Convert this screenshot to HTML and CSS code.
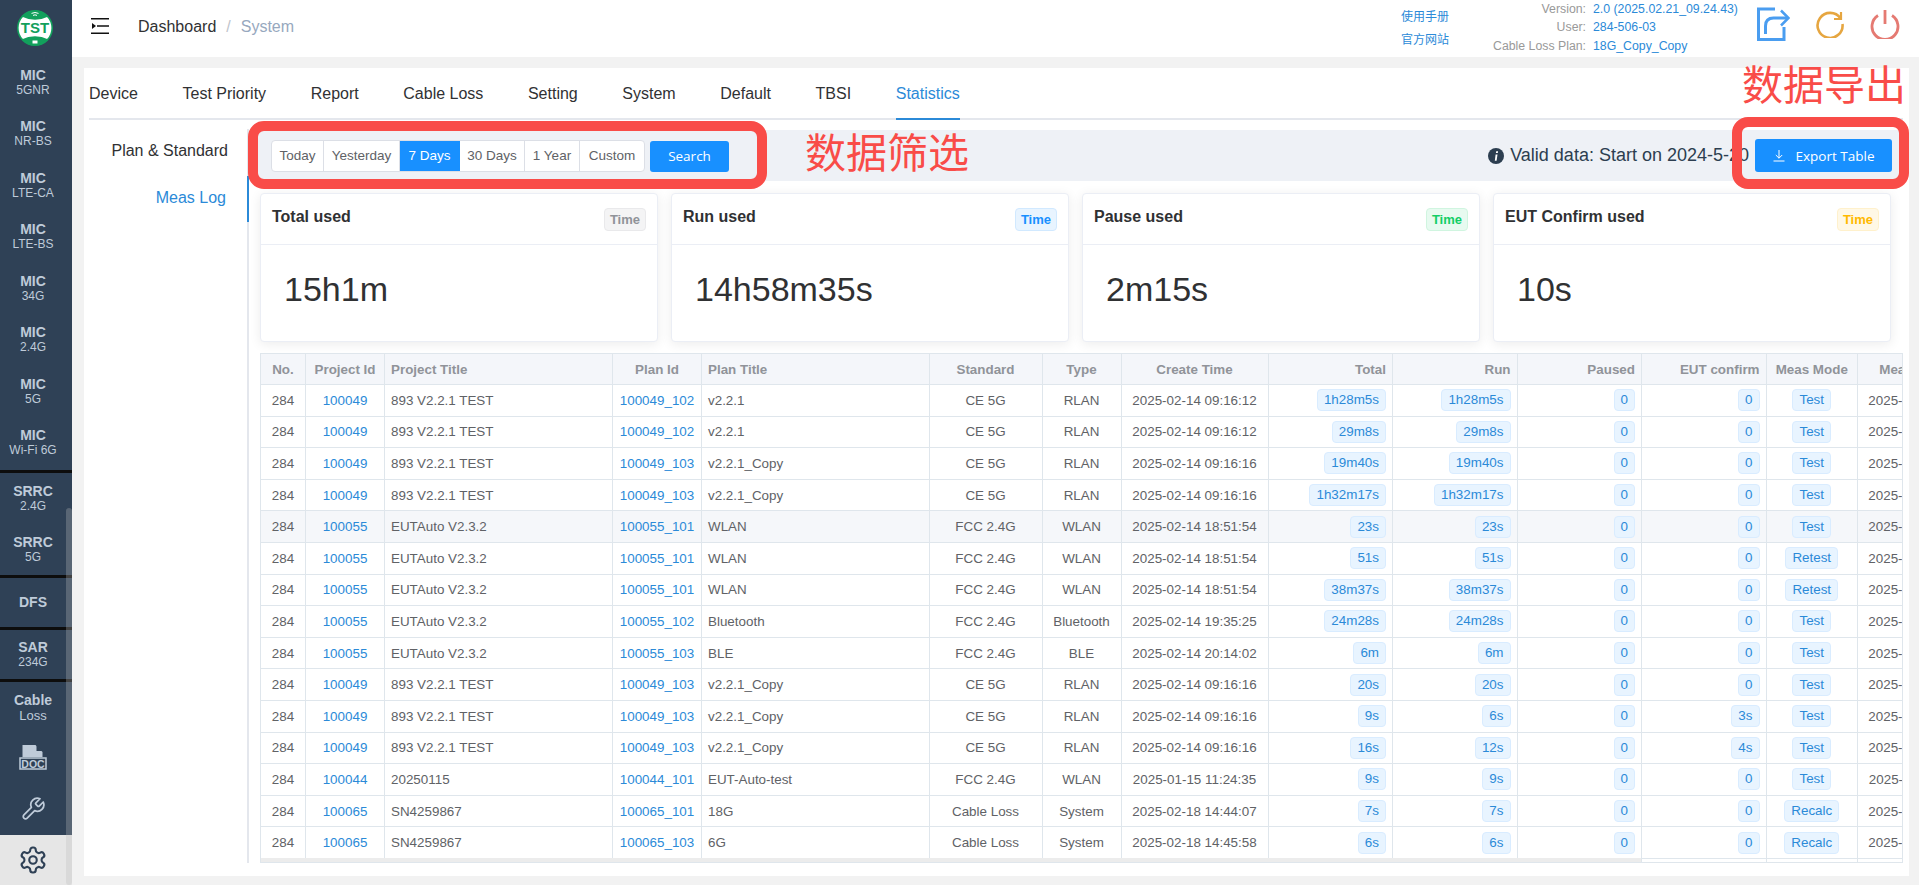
FILE: index.html
```html
<!DOCTYPE html>
<html lang="en">
<head>
    <meta charset="UTF-8">
    <title>System</title>
    <link rel="stylesheet" href="styles.css">
</head>
<body>

    <div class="app">
        <aside class="sidebar">
            <div class="logo">
                <svg width="36" height="36" viewBox="0 0 36 36">
                    <circle cx="18" cy="18" r="18" fill="#12a05c"/>
                    <circle cx="18" cy="18" r="16.4" fill="#fff"/>
                    <path d="M4.500 6.500Q18 13 31.500 6.500A18 18 0 0 0 4.500 6.500zM4.500 29.500Q18 23 31.500 29.500A18 18 0 0 1 4.500 29.500z" fill="#12a05c"/>
                    <path d="M14.500 3.400Q18 1.600 21.500 3.400M16 5.400Q18 4.300 20 5.400" fill="none" stroke="#fff" stroke-width="1"/>
                    <path d="M15.500 30.500h5v3h-5z" fill="#fff"/>
                    <text x="18" y="23.200" class="logo-text">TST</text>
                </svg>
            </div>
            <div class="menu-item mic"><b>MIC</b><span>5GNR</span></div>
            <div class="menu-item mic"><b>MIC</b><span>NR-BS</span></div>
            <div class="menu-item mic"><b>MIC</b><span>LTE-CA</span></div>
            <div class="menu-item mic"><b>MIC</b><span>LTE-BS</span></div>
            <div class="menu-item mic"><b>MIC</b><span>34G</span></div>
            <div class="menu-item mic"><b>MIC</b><span>2.4G</span></div>
            <div class="menu-item mic"><b>MIC</b><span>5G</span></div>
            <div class="menu-item mic group-end"><b>MIC</b><span>Wi-Fi 6G</span></div>
            <div class="menu-item tall"><b>SRRC</b><span>2.4G</span></div>
            <div class="menu-item tall group-end"><b>SRRC</b><span>5G</span></div>
            <div class="menu-item group-end"><b>DFS</b></div>
            <div class="menu-item group-end"><b>SAR</b><span>234G</span></div>
            <div class="menu-item tall"><b>Cable</b><span class="loss">Loss</span></div>
            <div class="menu-item">
                <svg width="28" height="25" viewBox="0 0 28 25">
                    <path d="M3.500 0h13l7 7v5h-20z" fill="#bfcbd9"/>
                    <path d="M17.500 0l6 6h-6z" fill="#2f4156"/>
                    <rect x="1" y="13" width="26" height="11" fill="#2f4156" stroke="#bfcbd9" stroke-width="1.500"/>
                    <text x="14" y="22.500" class="doc-text">DOC</text>
                </svg>
            </div>
            <div class="menu-item tool-item">
                <svg width="26" height="26" viewBox="0 0 24 24" fill="none" stroke="#bfcbd9" stroke-width="1.6" stroke-linejoin="round">
                    <path d="M14.7 6.3a1 1 0 0 0 0 1.4l1.6 1.6a1 1 0 0 0 1.4 0l3.77-3.77a6 6 0 0 1-7.94 7.94l-6.91 6.91a2.12 2.12 0 0 1-3-3l6.91-6.91a6 6 0 0 1 7.94-7.94l-3.76 3.76z"/>
                </svg>
            </div>
            <div class="menu-item gear-item">
                <svg width="30" height="30" viewBox="0 0 24 24" fill="none" stroke="#2f4156" stroke-width="1.7">
                    <path d="M12.22 2h-.44a2 2 0 0 0-2 2v.18a2 2 0 0 1-1 1.73l-.43.25a2 2 0 0 1-2 0l-.15-.08a2 2 0 0 0-2.73.73l-.22.38a2 2 0 0 0 .73 2.73l.15.1a2 2 0 0 1 1 1.72v.51a2 2 0 0 1-1 1.74l-.15.09a2 2 0 0 0-.73 2.73l.22.38a2 2 0 0 0 2.73.73l.15-.08a2 2 0 0 1 2 0l.43.25a2 2 0 0 1 1 1.73V20a2 2 0 0 0 2 2h.44a2 2 0 0 0 2-2v-.18a2 2 0 0 1 1-1.73l.43-.25a2 2 0 0 1 2 0l.15.08a2 2 0 0 0 2.73-.73l.22-.39a2 2 0 0 0-.73-2.73l-.15-.08a2 2 0 0 1-1-1.74v-.5a2 2 0 0 1 1-1.74l.15-.09a2 2 0 0 0 .73-2.73l-.22-.38a2 2 0 0 0-2.73-.73l-.15.08a2 2 0 0 1-2 0l-.43-.25a2 2 0 0 1-1-1.73V4a2 2 0 0 0-2-2z"/>
                    <circle cx="12" cy="12" r="3"/>
                </svg>
            </div>
            <div class="side-scroll"></div>
        </aside>

        <div class="main">
            <header class="navbar">
                <svg class="hamburger" width="18" height="16" viewBox="0 0 18 16">
                    <path d="M0 .8h18M6 8h12M0 15.2h18" stroke="#111" stroke-width="1.6" fill="none"/>
                    <path d="M1 5l4 3-4 3z" fill="#111"/>
                </svg>
                <div class="crumbs">
                    <span>Dashboard</span><i>/</i><span class="crumb-last">System</span>
                </div>
                <div class="nav-links">
                    <a>使用手册</a>
                    <a>官方网站</a>
                </div>
                <dl class="version">
                    <dt>Version:</dt><dd>2.0 (2025.02.21_09.24.43)</dd>
                    <dt>User:</dt><dd>284-506-03</dd>
                    <dt>Cable Loss Plan:</dt><dd>18G_Copy_Copy</dd>
                </dl>
                <div class="nav-icons">
                    <svg width="33" height="34" viewBox="0 0 33 34" fill="none" stroke="#4a9df0" stroke-width="3">
                        <path d="M18 2H1.500v30.500H27V20"/>
                        <path d="M8.500 27v-8q0-8 8-8H30"/>
                        <path d="M24 3.500l7.500 7.500-7.500 7.500" stroke-width="2.500"/>
                    </svg>
                    <svg width="28" height="28" viewBox="0 0 28 28" fill="none" stroke="#e6a640" stroke-width="2.600">
                        <path d="M24.500 8.500A12.500 12.500 0 1 0 26.500 14"/>
                        <path d="M18 9h7V2" stroke-width="2.200"/>
                    </svg>
                    <svg width="30" height="30" viewBox="0 0 30 30" fill="none" stroke="#e57a72" stroke-width="2.800">
                        <path d="M15 1v14"/>
                        <path d="M8 6.500a13 13 0 1 0 14 0"/>
                    </svg>
                </div>
            </header>

            <div class="content">
                <div class="panel">
                    <nav class="tabs">
                        <a>Device</a>
                        <a>Test Priority</a>
                        <a>Report</a>
                        <a>Cable Loss</a>
                        <a>Setting</a>
                        <a>System</a>
                        <a>Default</a>
                        <a>TBSI</a>
                        <a class="active">Statistics</a>
                    </nav>

                    <div class="tab-body">
                        <div class="side-tabs">
                            <a>Plan &amp; Standard</a>
                            <a class="active">Meas Log</a>
                        </div>

                        <div class="stats-pane">
                            <div class="toolbar">
                                <div class="range-group">
                                    <button>Today</button>
                                    <button>Yesterday</button>
                                    <button class="active">7 Days</button>
                                    <button>30 Days</button>
                                    <button>1 Year</button>
                                    <button>Custom</button>
                                </div>
                                <button class="btn-primary search-btn">Search</button>
                                <div class="valid-note">
                                    <svg width="16" height="16" viewBox="0 0 16 16">
                                        <circle cx="8" cy="8" r="8" fill="#2c3e50"/>
                                        <path d="M8.200 3.200h1.900l-.3 1.800H7.900zM7.600 6.400h1.900L8.600 12.800H6.800z" fill="#fff"/>
                                    </svg>
                                    <span>Valid data: Start on 2024-5-20</span>
                                </div>
                                <button class="btn-primary export-btn">
                                    <svg width="12" height="13" viewBox="0 0 12 13" fill="none" stroke="#fff" stroke-width="1">
                                        <path d="M6 1v8M2.800 6L6 9.200 9.200 6M.5 12h11"/>
                                    </svg>
                                    Export Table
                                </button>
                            </div>

                            <div class="cards">
                                <div class="card">
                                    <div class="card-head"><b>Total used</b><span class="tag-time grey">Time</span></div>
                                    <div class="card-value">15h1m</div>
                                </div>
                                <div class="card">
                                    <div class="card-head"><b>Run used</b><span class="tag-time blue">Time</span></div>
                                    <div class="card-value">14h58m35s</div>
                                </div>
                                <div class="card">
                                    <div class="card-head"><b>Pause used</b><span class="tag-time green">Time</span></div>
                                    <div class="card-value">2m15s</div>
                                </div>
                                <div class="card">
                                    <div class="card-head"><b>EUT Confirm used</b><span class="tag-time yellow">Time</span></div>
                                    <div class="card-value">10s</div>
                                </div>
                            </div>

                            <div class="table-wrap">
                                <table class="log-table">
                                    <colgroup>
                                        <col class="c-no"><col class="c-pid"><col class="c-ptitle"><col class="c-plan"><col class="c-plantitle"><col class="c-std"><col class="c-type"><col class="c-time"><col class="c-dur"><col class="c-dur"><col class="c-dur"><col class="c-dur"><col class="c-mode"><col class="c-start">
                                    </colgroup>
                                    <thead>
                                        <tr>
                                            <th>No.</th><th>Project Id</th><th class="left">Project Title</th><th>Plan Id</th><th class="left">Plan Title</th><th>Standard</th><th>Type</th><th>Create Time</th><th class="right">Total</th><th class="right">Run</th><th class="right">Paused</th><th class="right">EUT confirm</th><th>Meas Mode</th><th>Meas Start Time</th>
                                        </tr>
                                    </thead>
                                    <tbody>
                                        <tr><td>284</td><td><a>100049</a></td><td class="left">893 V2.2.1 TEST</td><td><a>100049_102</a></td><td class="left">v2.2.1</td><td>CE 5G</td><td>RLAN</td><td>2025-02-14 09:16:12</td><td class="right"><span class="tag">1h28m5s</span></td><td class="right"><span class="tag">1h28m5s</span></td><td class="right"><span class="tag">0</span></td><td class="right"><span class="tag">0</span></td><td><span class="tag">Test</span></td><td>2025-02-14 09:16:12</td></tr>
                                        <tr><td>284</td><td><a>100049</a></td><td class="left">893 V2.2.1 TEST</td><td><a>100049_102</a></td><td class="left">v2.2.1</td><td>CE 5G</td><td>RLAN</td><td>2025-02-14 09:16:12</td><td class="right"><span class="tag">29m8s</span></td><td class="right"><span class="tag">29m8s</span></td><td class="right"><span class="tag">0</span></td><td class="right"><span class="tag">0</span></td><td><span class="tag">Test</span></td><td>2025-02-14 09:16:12</td></tr>
                                        <tr><td>284</td><td><a>100049</a></td><td class="left">893 V2.2.1 TEST</td><td><a>100049_103</a></td><td class="left">v2.2.1_Copy</td><td>CE 5G</td><td>RLAN</td><td>2025-02-14 09:16:16</td><td class="right"><span class="tag">19m40s</span></td><td class="right"><span class="tag">19m40s</span></td><td class="right"><span class="tag">0</span></td><td class="right"><span class="tag">0</span></td><td><span class="tag">Test</span></td><td>2025-02-14 09:16:16</td></tr>
                                        <tr><td>284</td><td><a>100049</a></td><td class="left">893 V2.2.1 TEST</td><td><a>100049_103</a></td><td class="left">v2.2.1_Copy</td><td>CE 5G</td><td>RLAN</td><td>2025-02-14 09:16:16</td><td class="right"><span class="tag">1h32m17s</span></td><td class="right"><span class="tag">1h32m17s</span></td><td class="right"><span class="tag">0</span></td><td class="right"><span class="tag">0</span></td><td><span class="tag">Test</span></td><td>2025-02-14 09:16:16</td></tr>
                                        <tr class="hover-row"><td>284</td><td><a>100055</a></td><td class="left">EUTAuto V2.3.2</td><td><a>100055_101</a></td><td class="left">WLAN</td><td>FCC 2.4G</td><td>WLAN</td><td>2025-02-14 18:51:54</td><td class="right"><span class="tag">23s</span></td><td class="right"><span class="tag">23s</span></td><td class="right"><span class="tag">0</span></td><td class="right"><span class="tag">0</span></td><td><span class="tag">Test</span></td><td>2025-02-14 18:51:54</td></tr>
                                        <tr><td>284</td><td><a>100055</a></td><td class="left">EUTAuto V2.3.2</td><td><a>100055_101</a></td><td class="left">WLAN</td><td>FCC 2.4G</td><td>WLAN</td><td>2025-02-14 18:51:54</td><td class="right"><span class="tag">51s</span></td><td class="right"><span class="tag">51s</span></td><td class="right"><span class="tag">0</span></td><td class="right"><span class="tag">0</span></td><td><span class="tag">Retest</span></td><td>2025-02-14 18:51:54</td></tr>
                                        <tr><td>284</td><td><a>100055</a></td><td class="left">EUTAuto V2.3.2</td><td><a>100055_101</a></td><td class="left">WLAN</td><td>FCC 2.4G</td><td>WLAN</td><td>2025-02-14 18:51:54</td><td class="right"><span class="tag">38m37s</span></td><td class="right"><span class="tag">38m37s</span></td><td class="right"><span class="tag">0</span></td><td class="right"><span class="tag">0</span></td><td><span class="tag">Retest</span></td><td>2025-02-14 18:51:54</td></tr>
                                        <tr><td>284</td><td><a>100055</a></td><td class="left">EUTAuto V2.3.2</td><td><a>100055_102</a></td><td class="left">Bluetooth</td><td>FCC 2.4G</td><td>Bluetooth</td><td>2025-02-14 19:35:25</td><td class="right"><span class="tag">24m28s</span></td><td class="right"><span class="tag">24m28s</span></td><td class="right"><span class="tag">0</span></td><td class="right"><span class="tag">0</span></td><td><span class="tag">Test</span></td><td>2025-02-14 19:35:25</td></tr>
                                        <tr><td>284</td><td><a>100055</a></td><td class="left">EUTAuto V2.3.2</td><td><a>100055_103</a></td><td class="left">BLE</td><td>FCC 2.4G</td><td>BLE</td><td>2025-02-14 20:14:02</td><td class="right"><span class="tag">6m</span></td><td class="right"><span class="tag">6m</span></td><td class="right"><span class="tag">0</span></td><td class="right"><span class="tag">0</span></td><td><span class="tag">Test</span></td><td>2025-02-14 20:14:02</td></tr>
                                        <tr><td>284</td><td><a>100049</a></td><td class="left">893 V2.2.1 TEST</td><td><a>100049_103</a></td><td class="left">v2.2.1_Copy</td><td>CE 5G</td><td>RLAN</td><td>2025-02-14 09:16:16</td><td class="right"><span class="tag">20s</span></td><td class="right"><span class="tag">20s</span></td><td class="right"><span class="tag">0</span></td><td class="right"><span class="tag">0</span></td><td><span class="tag">Test</span></td><td>2025-02-14 09:16:16</td></tr>
                                        <tr><td>284</td><td><a>100049</a></td><td class="left">893 V2.2.1 TEST</td><td><a>100049_103</a></td><td class="left">v2.2.1_Copy</td><td>CE 5G</td><td>RLAN</td><td>2025-02-14 09:16:16</td><td class="right"><span class="tag">9s</span></td><td class="right"><span class="tag">6s</span></td><td class="right"><span class="tag">0</span></td><td class="right"><span class="tag">3s</span></td><td><span class="tag">Test</span></td><td>2025-02-14 09:16:16</td></tr>
                                        <tr><td>284</td><td><a>100049</a></td><td class="left">893 V2.2.1 TEST</td><td><a>100049_103</a></td><td class="left">v2.2.1_Copy</td><td>CE 5G</td><td>RLAN</td><td>2025-02-14 09:16:16</td><td class="right"><span class="tag">16s</span></td><td class="right"><span class="tag">12s</span></td><td class="right"><span class="tag">0</span></td><td class="right"><span class="tag">4s</span></td><td><span class="tag">Test</span></td><td>2025-02-14 09:16:16</td></tr>
                                        <tr><td>284</td><td><a>100044</a></td><td class="left">20250115</td><td><a>100044_101</a></td><td class="left">EUT-Auto-test</td><td>FCC 2.4G</td><td>WLAN</td><td>2025-01-15 11:24:35</td><td class="right"><span class="tag">9s</span></td><td class="right"><span class="tag">9s</span></td><td class="right"><span class="tag">0</span></td><td class="right"><span class="tag">0</span></td><td><span class="tag">Test</span></td><td>2025-01-15 11:24:35</td></tr>
                                        <tr><td>284</td><td><a>100065</a></td><td class="left">SN4259867</td><td><a>100065_101</a></td><td class="left">18G</td><td>Cable Loss</td><td>System</td><td>2025-02-18 14:44:07</td><td class="right"><span class="tag">7s</span></td><td class="right"><span class="tag">7s</span></td><td class="right"><span class="tag">0</span></td><td class="right"><span class="tag">0</span></td><td><span class="tag">Recalc</span></td><td>2025-02-18 14:44:07</td></tr>
                                        <tr><td>284</td><td><a>100065</a></td><td class="left">SN4259867</td><td><a>100065_103</a></td><td class="left">6G</td><td>Cable Loss</td><td>System</td><td>2025-02-18 14:45:58</td><td class="right"><span class="tag">6s</span></td><td class="right"><span class="tag">6s</span></td><td class="right"><span class="tag">0</span></td><td class="right"><span class="tag">0</span></td><td><span class="tag">Recalc</span></td><td>2025-02-18 14:45:58</td></tr>
                                        <tr><td></td><td></td><td></td><td></td><td></td><td></td><td></td><td></td><td></td><td></td><td></td><td></td><td></td><td></td></tr>
                                    </tbody>
                                </table>
                                <div class="table-scroll"></div>
                            </div>
                        </div>
                    </div>
                </div>
            </div>
        </div>
    </div>

    <!-- red notes drawn over the shot -->
    <div class="note-box note-filter"></div>
    <div class="note-box note-export"></div>
    <div class="note-text note-filter-text">数据筛选</div>
    <div class="note-text note-export-text">数据导出</div>

</body>
</html>
```

FILE: styles.css
```css
html, body {
    height: 100%;
    margin: 0;
    overflow: hidden;
}
body {
    font-family: "Liberation Sans", Arial, "Noto Sans CJK SC", sans-serif;
    color: #303133;
    background-color: #f2f2f2;
}
a {
    color: inherit;
    text-decoration: none;
}
button {
    font-family: inherit;
    cursor: pointer;
}
.app {
    display: flex;
    height: 885px;
}

/* sidebar */
.sidebar {
    position: relative;
    flex: 0 0 72px;
    display: flex;
    flex-direction: column;
    overflow: hidden;
    background-color: #2f4156;
    color: #bfcbd9;
}
.logo {
    height: 58px;
    display: flex;
    justify-content: center;
    padding: 10px 2px 0 0;
    box-sizing: border-box;
}
.logo-text {
    font-size: 15px;
    font-weight: bold;
    text-anchor: middle;
    fill: #12a05c;
}
.doc-text {
    font-size: 10.5px;
    font-weight: bold;
    text-anchor: middle;
    fill: #bfcbd9;
}
.menu-item {
    height: 49px;
    padding-right: 6px;
    display: flex;
    flex-direction: column;
    align-items: center;
    justify-content: center;
    flex-shrink: 0;
    box-sizing: content-box;
    line-height: 15px;
}
.menu-item.mic {
    height: 49.500px;
    padding-bottom: 2px;
}
.menu-item.tall {
    height: 51px;
}
.menu-item b {
    font-size: 14px;
}
.menu-item span {
    font-size: 12px;
}
.menu-item .loss {
    font-size: 13px;
}
.group-end {
    border-bottom: 3px solid #0d0d0d;
}
.tool-item {
    height: 53px;
}
.gear-item {
    height: 50px;
    background-color: #e6e6e6;
}
.side-scroll {
    position: absolute;
    left: 66px;
    top: 508px;
    width: 6px;
    height: 377px;
    border-radius: 3px;
    background-color: rgba(190, 190, 190, 0.3);
}

/* top bar */
.main {
    flex: 1;
    min-width: 0;
    display: flex;
    flex-direction: column;
}
.navbar {
    height: 57px;
    flex-shrink: 0;
    display: flex;
    align-items: center;
    background-color: #fff;
    padding: 0 19px 0 19px;
}
.hamburger {
    flex-shrink: 0;
    margin-bottom: 5px;
}
.crumbs {
    margin-left: 29px;
    font-size: 16px;
    flex: 1;
    margin-bottom: 4px;
}
.crumbs i {
    font-style: normal;
    color: #c0c4cc;
    margin: 0 10px;
}
.crumb-last {
    color: #97a8be;
}
.nav-links {
    display: flex;
    flex-direction: column;
    gap: 6px;
    font-size: 12px;
    line-height: 17px;
    color: #2b8ad8;
    margin-right: 2px;
}
.version {
    display: grid;
    grid-template-columns: 135px 165px;
    column-gap: 7px;
    margin: 0;
    font-size: 12.300px;
    line-height: 18.3px;
    align-self: flex-start;
    padding-top: 0;
}
.version dt {
    text-align: right;
    color: #999;
}
.version dd {
    margin: 0;
    color: #2b8ad8;
}
.nav-icons {
    display: flex;
    align-items: center;
    gap: 26px;
    margin-left: -1px;
    margin-bottom: 10px;
}

/* panel */
.content {
    flex: 1;
    min-height: 0;
    padding: 11px 10px 9px 12px;
    display: flex;
}
.panel {
    flex: 1;
    min-width: 0;
    display: flex;
    flex-direction: column;
    background-color: #fff;
}
.tabs {
    height: 50px;
    margin-left: 5px;
    margin-right: 6px;
    display: flex;
    gap: 44.600px;
    align-items: flex-start;
    font-size: 16px;
    border-bottom: 2px solid #e4e7ed;
    flex-shrink: 0;
}
.tabs a {
    line-height: 52px;
    height: 50px;
    color: #303133;
}
.tabs .active {
    color: #2b8ad8;
    border-bottom: 2px solid #2b8ad8;
}
.tab-body {
    flex: 1;
    min-height: 0;
    display: flex;
    padding: 9px 6px 13px 0;
}
.side-tabs {
    flex: 0 0 163px;
    box-sizing: content-box;
    border-right: 2px solid #e4e7ed;
    display: flex;
    flex-direction: column;
    align-items: stretch;
    font-size: 16px;
}
.side-tabs a {
    height: 46.5px;
    line-height: 44px;
    text-align: right;
    padding-right: 21px;
    color: #303133;
    margin-right: -2px;
}
.side-tabs .active {
    color: #2b8ad8;
    border-right: 2px solid #2b8ad8;
}

/* statistics */
.stats-pane {
    flex: 1;
    min-width: 0;
    display: flex;
    flex-direction: column;
    padding-left: 5px;
}
.toolbar {
    height: 51px;
    flex-shrink: 0;
    margin-top: 1px;
    display: flex;
    align-items: center;
    background-color: #eef1f6;
    padding: 0 11px 0 17px;
}
.range-group {
    display: flex;
    height: 30px;
    border: 1px solid #dcdfe6;
    border-radius: 4px;
    background-color: #fff;
    overflow: hidden;
}
.range-group button {
    height: 100%;
    padding: 0;
    border: 0;
    border-right: 1px solid #dcdfe6;
    background: none;
    font-size: 13.5px;
    color: #606266;
    width: 52px;
}
.range-group button:nth-child(2) { width: 76px; }
.range-group button:nth-child(3) { width: 60px; }
.range-group button:nth-child(4) { width: 65px; }
.range-group button:nth-child(5) { width: 55px; }
.range-group button:nth-child(6) { width: 64px; border-right: 0; }
.range-group .active {
    background-color: #1890ff;
    color: #fff;
    border-right-color: #1890ff;
}
.btn-primary {
    height: 33px;
    border: 0;
    border-radius: 3px;
    background-color: #1890ff;
    color: #fff;
    font-family: "Open Sans", sans-serif;
    font-size: 13.500px;
}
.search-btn {
    width: 79px;
    margin-left: 5px;
    height: 31px;
    margin-top: 1px;
}
.valid-note {
    margin-left: auto;
    display: flex;
    align-items: center;
    gap: 6px;
    font-size: 18px;
    color: #2c3e50;
}
.export-btn {
    width: 137px;
    margin-left: 6px;
    display: flex;
    align-items: center;
    justify-content: center;
    gap: 11px;
}
.cards {
    display: grid;
    grid-template-columns: repeat(4, 1fr);
    gap: 13px;
    flex-shrink: 0;
    margin: 12px 12px 0 6px;
}
.card {
    height: 149px;
    box-sizing: border-box;
    border: 1px solid #ebeef5;
    border-radius: 4px;
    box-shadow: 0 2px 12px rgba(0, 0, 0, 0.08);
    background-color: #fff;
}
.card-head {
    height: 51px;
    box-sizing: border-box;
    border-bottom: 1px solid #ebeef5;
    display: flex;
    justify-content: space-between;
    align-items: flex-start;
    padding: 14px 11px 0 11px;
    font-size: 16px;
}
.tag-time {
    height: 23px;
    box-sizing: border-box;
    line-height: 21px;
    padding: 0 5px;
    border: 1px solid;
    border-radius: 4px;
    font-size: 13px;
    font-weight: bold;
}
.grey {
    background-color: #f4f4f5;
    border-color: #e9e9eb;
    color: #909399;
}
.blue {
    background-color: #e8f4ff;
    border-color: #d1e9ff;
    color: #1890ff;
}
.green {
    background-color: #e7faf0;
    border-color: #d0f5e0;
    color: #13ce66;
}
.yellow {
    background-color: #fff8e6;
    border-color: #fff1cc;
    color: #ffba00;
}
.card-value {
    font-size: 34px;
    padding: 0 0 0 23px;
    line-height: 88px;
}

/* table */
.table-wrap {
    position: relative;
    flex: 1;
    min-height: 0;
    margin-top: 11px;
    margin-left: 6px;
    overflow: hidden;
    border: 1px solid #dfe6ec;
}
.log-table {
    table-layout: fixed;
    width: 1742px;
    border-collapse: separate;
    border-spacing: 0;
    font-size: 13.4px;
    color: #606266;
}
.c-no { width: 45px; }
.c-pid { width: 79px; }
.c-ptitle { width: 228px; }
.c-plan { width: 89px; }
.c-plantitle { width: 227.5px; }
.c-std { width: 113px; }
.c-type { width: 79px; }
.c-time { width: 147px; }
.c-dur { width: 124.500px; }
.c-mode { width: 91.500px; }
.c-start { width: 146px; }
.log-table th, .log-table td {
    height: 31.6px;
    padding: 0 6px;
    box-sizing: border-box;
    border-right: 1px solid #dfe6ec;
    border-bottom: 1px solid #dfe6ec;
    text-align: center;
    white-space: nowrap;
    overflow: hidden;
}
.log-table th {
    height: 31px;
    background-color: #f4f6fa;
    color: #909399;
    font-weight: bold;
}
.log-table .left {
    text-align: left;
}
.log-table .right {
    text-align: right;
}
.log-table a {
    color: #2b8ad8;
}
.hover-row td {
    background-color: #f5f7fa;
}
.tag {
    display: inline-block;
    height: 22px;
    line-height: 20px;
    box-sizing: border-box;
    padding: 0 6px;
    border: 1px solid #d9ecff;
    border-radius: 4px;
    background-color: #e8f4ff;
    color: #2b8ad8;
}
.table-scroll {
    position: absolute;
    left: 0;
    bottom: 0;
    width: 1380px;
    height: 4px;
    background-color: #ececec;
}

/* red notes */
.note-box {
    position: absolute;
    box-sizing: border-box;
    border: 10px solid #f94c48;
    border-radius: 16px;
}
.note-filter {
    left: 248px;
    top: 121px;
    width: 519px;
    height: 68px;
}
.note-export {
    left: 1732px;
    top: 117px;
    width: 177px;
    height: 72px;
}
.note-text {
    position: absolute;
    font-family: "Noto Sans CJK SC", sans-serif;
    font-size: 41px;
    line-height: 48px;
    color: #f94c48;
}
.note-filter-text {
    left: 805px;
    top: 126px;
}
.note-export-text {
    left: 1742px;
    top: 58px;
}
```
